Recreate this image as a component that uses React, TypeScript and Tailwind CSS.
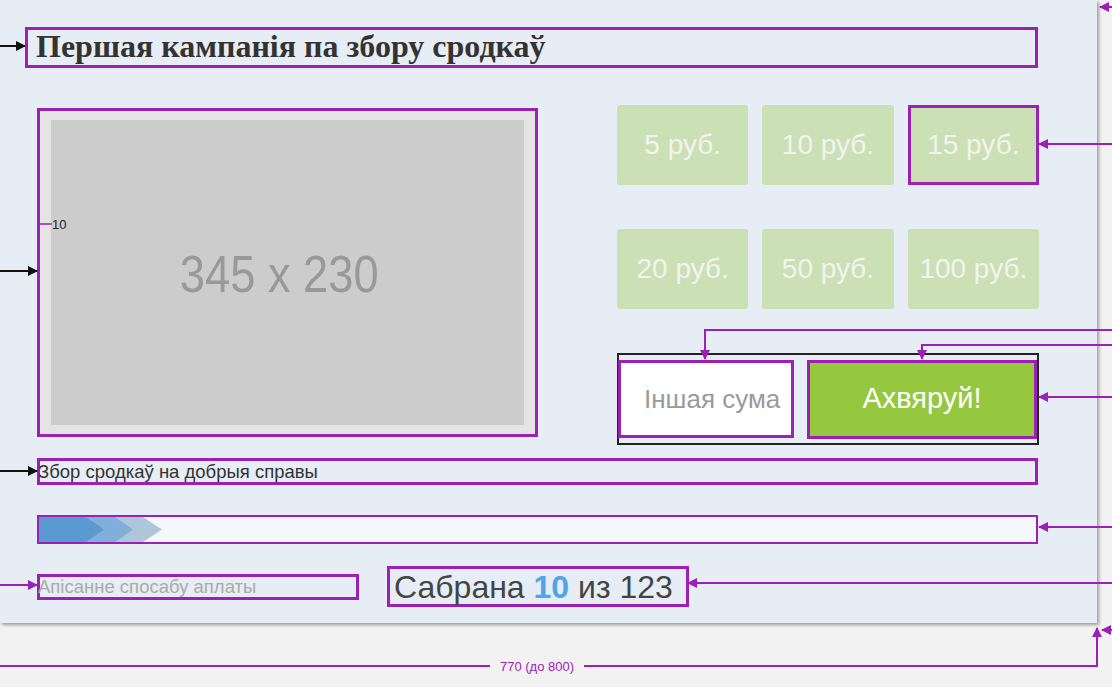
const amounts = ["5 руб.", "10 руб.", "15 руб.", "20 руб.", "50 руб.", "100 руб."];

const P = "#9c1fb6";

function Annotations() {
  // the designer's arrows over the mockup
  return (
    <svg className="pointer-events-none absolute inset-0" width="1112" height="687" viewBox="0 0 1112 687">
      <defs>
        <marker id="ab" viewBox="0 0 10 10" refX="9" refY="5" markerWidth="5" markerHeight="5" orient="auto">
          <path d="M0 0 L10 5 L0 10 z" fill="#111" />
        </marker>
        <marker id="ap" viewBox="0 0 10 10" refX="9" refY="5" markerWidth="5" markerHeight="5" orient="auto">
          <path d="M0 0 L10 5 L0 10 z" fill={P} />
        </marker>
      </defs>
      <g stroke="#111" strokeWidth="2" fill="none" markerEnd="url(#ab)">
        <line x1="0" y1="46" x2="25" y2="46" />
        <line x1="0" y1="271" x2="37" y2="271" />
        <line x1="0" y1="471" x2="37" y2="471" />
      </g>
      <g stroke={P} strokeWidth="2" fill="none" markerEnd="url(#ap)">
        <line x1="0" y1="585" x2="37" y2="585" />
        <line x1="1112" y1="7" x2="1100" y2="7" />
        <line x1="1112" y1="144" x2="1039" y2="144" />
        <polyline points="1112,330 705,330 705,359" />
        <polyline points="1112,345 922,345 922,359" />
        <line x1="1112" y1="397" x2="1039" y2="397" />
        <line x1="1112" y1="527" x2="1039" y2="527" />
        <line x1="1112" y1="583" x2="688" y2="583" />
        <line x1="1112" y1="630" x2="1102" y2="630" />
        <polyline points="584,666 1097,666 1097,628" />
      </g>
      <line x1="0" y1="666" x2="490" y2="666" stroke={P} strokeWidth="2" />
      <text x="537" y="671" textAnchor="middle" fontSize="13" fill={P} fontFamily="Liberation Sans, Arial, sans-serif">
        770 (до 800)
      </text>
      <line x1="40" y1="224" x2="52" y2="224" stroke={P} strokeWidth="1.5" />
      <text x="52" y="229" fontSize="13" fill="#222" fontFamily="Liberation Sans, Arial, sans-serif">
        10
      </text>
    </svg>
  );
}

function Progress() {
  return (
    <div className="mt-[30px] h-[29px] w-[1001px] border-2 border-[#9c1fb6] bg-[#f5f8fb]">
      <svg width="130" height="25" viewBox="0 0 130 25" className="block">
        <path d="M0 0 H104 L123 12.5 L104 25 H0 z" fill="#aec6da" />
        <path d="M0 0 H76 L94 12.5 L76 25 H0 z" fill="#80b0d9" />
        <path d="M0 0 H47 L65 12.5 L47 25 H0 z" fill="#5b9ad0" />
      </svg>
    </div>
  );
}

export default function App() {
  return (
    <div className="relative h-[687px] w-[1112px] overflow-hidden bg-[#f2f2f2] font-['Liberation_Sans',Arial,sans-serif]">
      <div className="flex h-[623px] w-[1097px] flex-col bg-[#e6edf5] pl-[25px] pt-[27px] shadow-[2px_2px_3px_rgba(0,0,0,0.35)]">
        <div className="flex h-[41px] w-[1013px] items-center border-[3px] border-[#9c1fb6] pb-[4px] pl-[8px]">
          <h1 className="font-['Liberation_Serif','Times_New_Roman',serif] text-[32px] font-bold leading-none text-[#333]">
            Першая кампанія па збору сродкаў
          </h1>
        </div>

        <div className="ml-[12px] mt-[37px] flex items-start">
          <div className="mt-[3px] h-[329px] w-[501px] border-[3px] border-[#9c1fb6] bg-[#e4e4e4] px-[11px] py-[9px]">
            <div className="flex h-full w-full items-center justify-center bg-[#cccccc] pr-[16px]">
              <span className="mt-[2px] inline-block scale-x-87 text-[52px] leading-none text-[#999]">345 x 230</span>
            </div>
          </div>

          <div className="ml-[79px] flex w-[422px] flex-col">
            <div className="grid grid-cols-3 gap-x-[14px] gap-y-[44px]">
              {amounts.map((a, i) => (
                <button
                  key={a}
                  className={`flex h-[80px] items-center justify-center rounded-[3px] bg-[#cbe0b5] text-[28px] text-[#f2f4ef] ${
                    i === 2 ? "border-[3px] border-[#9c1fb6] rounded-none" : ""
                  }`}
                >
                  {a}
                </button>
              ))}
            </div>
            <div className="mt-[44px] flex h-[92px] items-center gap-[13px] border-2 border-[#222] px-0">
              <div className="-ml-[1px] flex h-[78px] w-[176px] items-center border-[3px] border-[#9c1fb6] bg-white pl-[23px] text-[26px] text-[#9a9a9a]">
                Іншая сума
              </div>
              <button className="flex h-[79px] flex-1 items-center justify-center border-[3px] border-[#9c1fb6] bg-[#95c83f] text-[29px] text-white">
                Ахвяруй!
              </button>
            </div>
          </div>
        </div>

        <div className="ml-[12px] flex flex-col">
          <div className="mt-[13px] flex h-[27px] w-[1001px] items-center border-[3px] border-[#9c1fb6] text-[18.5px] text-[#333]">
            <span className="-ml-[2px]">Збор сродкаў на добрыя справы</span>
          </div>
          <Progress />
          <div className="mt-[22px] flex items-center">
            <div className="flex h-[26px] w-[322px] items-center border-[3px] border-[#9c1fb6] text-[18.5px] text-[#aaa]">
              <span className="-ml-[2px]">Апісанне спосабу аплаты</span>
            </div>
            <div className="ml-[28px] flex h-[41px] w-[302px] items-center border-[3px] border-[#9c1fb6] pl-[4px] text-[32px] text-[#444]">
              Сабрана&nbsp;<span className="font-bold text-[#4ea5e9]">10</span>&nbsp;из 123
            </div>
          </div>
        </div>
      </div>
      <Annotations />
    </div>
  );
}
